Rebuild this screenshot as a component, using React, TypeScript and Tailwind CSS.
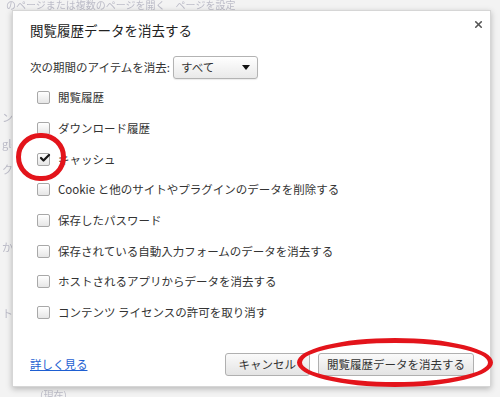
import { Check, X } from 'lucide-react';

const FONT = { fontFamily: '"Noto Sans CJK JP", "Noto Sans", sans-serif' };

const items = [
  { label: '閲覧履歴', checked: false },
  { label: 'ダウンロード履歴', checked: false },
  { label: 'キャッシュ', checked: true },
  { label: 'Cookie と他のサイトやプラグインのデータを削除する', checked: false },
  { label: '保存したパスワード', checked: false },
  { label: '保存されている自動入力フォームのデータを消去する', checked: false },
  { label: 'ホストされるアプリからデータを消去する', checked: false },
  { label: 'コンテンツ ライセンスの許可を取り消す', checked: false },
];

function CheckBox({ checked }: { checked: boolean }) {
  return (
    <span className="relative flex h-[13px] w-[13px] shrink-0 items-center justify-center rounded-[2px] border border-[#a8a8a8] bg-gradient-to-b from-white to-[#e6e6e6]">
      {checked ? <Check className="absolute -top-[2px] left-[1px] h-[12px] w-[12px] text-[#1a1a1a]" strokeWidth={4.5} /> : null}
    </span>
  );
}

export default function App() {
  return (
    <div className="relative h-[397px] w-[500px] overflow-hidden bg-[#f3f3f3] text-[#333]" style={FONT}>
      {/* faint page behind the dialog */}
      <div className="flex flex-col pl-[2px] text-[10px] text-[#bcbcc8] blur-[0.4px]">
        <p className="pl-[4px] leading-[10px]">のページまたは複数のページを開く　ページを設定</p>
        <div className="mt-[100px] flex flex-col gap-[12px] text-[11px] leading-[14px]">
          <span>ン</span>
          <span>gle</span>
          <span>ク</span>
          <span className="mt-[52px]">から</span>
          <span className="mt-[40px]">ト</span>
        </div>
        <p className="mt-[70px] pl-[38px] leading-[10px]">(現在)</p>
      </div>

      {/* dialog */}
      <div className="absolute left-[12px] top-[10px] flex h-[377px] w-[479px] flex-col border border-[#d6d6d6] bg-white pl-[17px] pt-[10px] shadow-[0_2px_6px_rgba(0,0,0,0.25)]">
        <X className="absolute right-[6px] top-[8px] h-[11px] w-[11px] text-[#555]" strokeWidth={3.5} />
        <h1 className="text-[13.5px] leading-[18px] text-[#222]">閲覧履歴データを消去する</h1>

        <div className="mt-[17px] flex h-[23px] items-center text-[11.5px]">
          <span>次の期間のアイテムを消去:</span>
          <div className="ml-[3px] flex h-[23px] w-[85px] items-center justify-between rounded-[3px] border border-[#b3b3b3] bg-gradient-to-b from-white to-[#e9e9e9] pl-[7px] pr-[7px] shadow-[0_1px_1px_rgba(0,0,0,0.08)]">
            <span>すべて</span>
            <span className="h-0 w-0 border-x-[4px] border-t-[5px] border-x-transparent border-t-[#111]" />
          </div>
        </div>

        <ul className="mt-[3.5px] flex flex-col">
          {items.map((item) => (
            <li key={item.label} className="flex h-[30.7px] items-center gap-[8px] pl-[7px] text-[11.5px]">
              <CheckBox checked={item.checked} />
              <span>{item.label}</span>
            </li>
          ))}
        </ul>

        <div className="mt-[25px] flex items-center justify-between pr-[16px]">
          <a className="text-[11.5px] text-[#1e5fd2] underline">詳しく見る</a>
          <div className="flex gap-[8px] text-[11.5px]">
            <button className="h-[23px] rounded-[3px] border border-[#b0b0b0] bg-gradient-to-b from-[#fafafa] to-[#e4e4e4] px-[13px] text-[#333]">
              キャンセル
            </button>
            <button className="h-[23px] rounded-[3px] border border-[#b0b0b0] bg-gradient-to-b from-[#fafafa] to-[#e4e4e4] px-[8px] text-[#333]">
              閲覧履歴データを消去する
            </button>
          </div>
        </div>
      </div>

      {/* red annotation marks */}
      <div className="absolute left-[16px] top-[133px] h-[48px] w-[50px] rounded-full border-[5px] border-[#e3141b]" />
      <div className="absolute left-[297px] top-[338px] h-[49px] w-[196px] rounded-[50%] border-[5px] border-[#e3141b]" />
    </div>
  );
}
